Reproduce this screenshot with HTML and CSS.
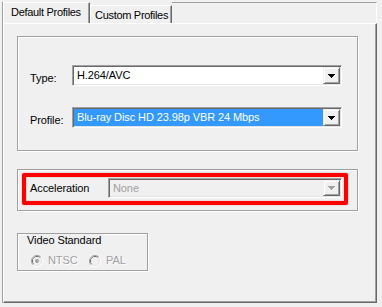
FILE: index.html
```html
<!DOCTYPE html>
<html lang="en">
<head>
  <meta charset="UTF-8" />
  <title>Profiles</title>
  <link rel="stylesheet" href="styles.css">
</head>
<body>
  <div class="dialog">
    <!-- Tab strip -->
    <div class="tabs">
      <div class="tab tab-active">Default Profiles</div>
      <div class="tab tab-custom">Custom Profiles</div>
      <div class="tab-fill"></div>
    </div>

    <!-- Tab page -->
    <div class="panel">
      <div class="group group-profile">
        <div class="row">
          <span class="label label-low">Type:</span>
          <div class="combo">
            <div class="value">H.264/AVC</div>
            <div class="drop">
              <svg width="7" height="4" viewBox="0 0 7 4"><path d="M0 0h7v1h-1v1h-1v1h-1v1h-1v-1h-1v-1h-1v-1h-1z" fill="#000"/></svg>
            </div>
          </div>
        </div>
        <div class="row">
          <span class="label label-low">Profile:</span>
          <div class="combo">
            <div class="value value-selected">Blu-ray Disc HD 23.98p VBR 24 Mbps</div>
            <div class="drop">
              <svg width="7" height="4" viewBox="0 0 7 4"><path d="M0 0h7v1h-1v1h-1v1h-1v1h-1v-1h-1v-1h-1v-1h-1z" fill="#000"/></svg>
            </div>
          </div>
        </div>
      </div>

      <div class="group group-accel">
        <div class="highlight"></div>
        <div class="row">
          <span class="label label-accel">Acceleration</span>
          <div class="combo combo-disabled">
            <div class="value">None</div>
            <div class="drop">
              <svg width="7" height="4" viewBox="0 0 7 4"><path d="M0 0h7v1h-1v1h-1v1h-1v1h-1v-1h-1v-1h-1v-1h-1z" fill="#a0a0a0"/></svg>
            </div>
          </div>
        </div>
      </div>

      <div class="group group-video">
        <span class="group-title">Video Standard</span>
        <div class="radios">
          <div class="radio">
            <svg width="12" height="12" viewBox="0 0 12 12">
              <path d="M2.11 9.89A5.5 5.5 0 0 1 9.89 2.11" fill="none" stroke="#a0a0a0"/>
              <path d="M9.89 2.11A5.5 5.5 0 0 1 2.11 9.89" fill="none" stroke="#fff"/>
              <path d="M2.82 9.18A4.5 4.5 0 0 1 9.18 2.82" fill="none" stroke="#696969"/>
              <path d="M9.18 2.82A4.5 4.5 0 0 1 2.82 9.18" fill="none" stroke="#e3e3e3"/>
              <circle cx="6" cy="6" r="4" fill="#f0f0f0"/>
              <circle cx="6" cy="6" r="2" fill="#a0a0a0"/>
            </svg>
            <span class="radio-text">NTSC</span>
          </div>
          <div class="radio">
            <svg width="12" height="12" viewBox="0 0 12 12">
              <path d="M2.11 9.89A5.5 5.5 0 0 1 9.89 2.11" fill="none" stroke="#a0a0a0"/>
              <path d="M9.89 2.11A5.5 5.5 0 0 1 2.11 9.89" fill="none" stroke="#fff"/>
              <path d="M2.82 9.18A4.5 4.5 0 0 1 9.18 2.82" fill="none" stroke="#696969"/>
              <path d="M9.18 2.82A4.5 4.5 0 0 1 2.82 9.18" fill="none" stroke="#e3e3e3"/>
              <circle cx="6" cy="6" r="4" fill="#f0f0f0"/>
            </svg>
            <span class="radio-text">PAL</span>
          </div>
        </div>
      </div>
    </div>
  </div>
</body>
</html>
```

FILE: styles.css
```css
/* Basic reset */
* {
  margin: 0;
  padding: 0;
  box-sizing: border-box;
}

body {
  background-color: #f0f0f0;
  font-family: "Liberation Sans", Arial, sans-serif;
  font-size: 11px;
  line-height: 13px;
  letter-spacing: -0.1px;
  color: #000;
}

.dialog {
  margin: 2px 0 0 2px;
  width: 375px;
  border-left: 1px solid #a0a0a0;
}

/* Tab strip */
.tabs {
  display: flex;
  align-items: flex-end;
  height: 21px;
}

.tab {
  border: 1px solid #fff;
  border-bottom: none;
  border-right-color: #696969;
  box-shadow: inset -1px 0 #a0a0a0;
  white-space: nowrap;
  letter-spacing: -0.3px;
}

.tab-active {
  width: 87px;
  height: 21px;
  padding: 3px 0 0 7px;
}

.tab-custom {
  width: 82px;
  height: 18px;
  padding: 3px 0 0 4px;
}

.tab-fill {
  flex: 1;
  height: 21px;
  border-top: 1px solid #a0a0a0;
  border-right: 1px solid #fff;
}

/* Tab page */
.panel {
  height: 280px;
  border-top: 1px solid #fff;
  border-left: 1px solid #fff;
  border-right: 1px solid #696969;
  border-bottom: 1px solid #696969;
  box-shadow: inset -1px -1px #a0a0a0;
  padding: 12px 0 0 13px;
}

/* Etched group boxes */
.group {
  width: 341px;
  border: 1px solid #a0a0a0;
  box-shadow: 1px 1px 0 #fff, inset 1px 1px 0 #fff;
}

.group-profile {
  height: 115px;
  padding: 28px 0 0 12px;
}

.group-accel {
  position: relative;
  height: 42px;
  margin-top: 18px;
  padding: 8px 0 0 12px;
}

.group-video {
  width: 131px;
  height: 38px;
  margin-top: 22px;
}

.group-title {
  display: inline-block;
  margin: -7px 0 0 8px;
  padding: 0 2px 0 1px;
  background-color: #f0f0f0;
}

.row {
  display: flex;
  align-items: center;
}

.row + .row {
  margin-top: 21px;
}

.label {
  width: 42px;
}

.label-low {
  margin-top: 5px;
}

.label-accel {
  width: 78px;
}

/* Combo boxes */
.combo {
  width: 270px;
  height: 21px;
  display: flex;
  padding: 1px;
  border: 1px solid;
  border-color: #a0a0a0 #fff #fff #a0a0a0;
  box-shadow: inset 1px 1px #696969, inset -1px -1px #e3e3e3;
  background-color: #fff;
}

.value {
  flex: 1;
  padding-left: 3px;
  display: flex;
  align-items: center;
  white-space: nowrap;
  overflow: hidden;
}

.value-selected {
  background-color: #3399ff;
  color: #fff;
}

.drop {
  width: 17px;
  background-color: #f0f0f0;
  border: 1px solid;
  border-color: #f0f0f0 #696969 #696969 #f0f0f0;
  box-shadow: inset 1px 1px #fff, inset -1px -1px #a0a0a0;
  display: flex;
  align-items: center;
  justify-content: center;
}

.combo-disabled {
  width: 234px;
  height: 20px;
  background-color: #f0f0f0;
  color: #a0a0a0;
}

/* Red annotation frame */
.highlight {
  position: absolute;
  left: 4px;
  top: 3px;
  width: 326px;
  height: 32px;
  border: 4px solid #ff0000;
  border-radius: 2px;
  box-shadow: 0 0 1px #ff3030, inset 0 0 1px #ff3030;
}

/* Radio buttons */
.radios {
  display: flex;
  margin: 7px 0 0 13px;
}

.radio {
  width: 63px;
  display: flex;
  align-items: center;
}

.radio-text {
  margin-left: 5px;
  color: #a0a0a0;
  text-shadow: 1px 1px 0 #fff;
}
```
